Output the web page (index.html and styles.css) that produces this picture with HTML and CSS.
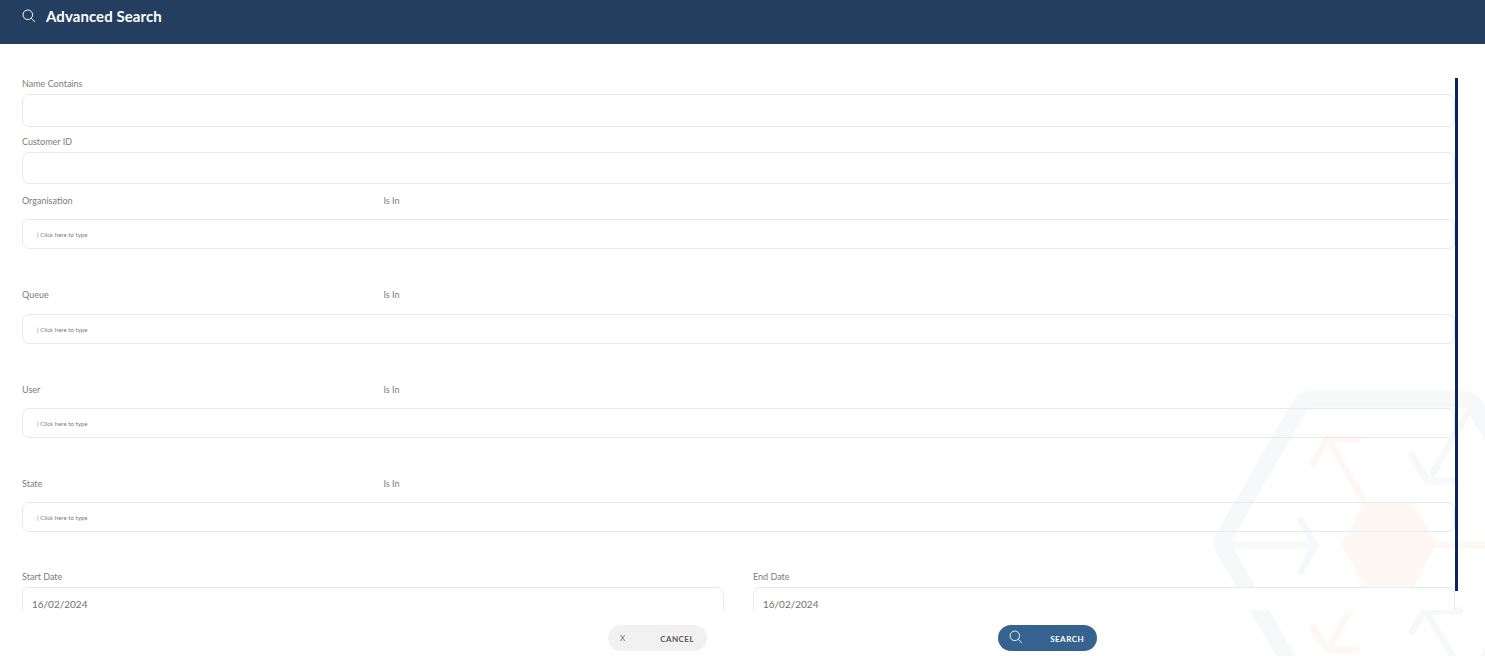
FILE: index.html
```html
<!DOCTYPE html>
<html lang="en">
<head>
<meta charset="utf-8">
<title>Advanced Search</title>
<link rel="stylesheet" href="styles.css">
</head>
<body>
<div class="page">
  <svg class="watermark" viewBox="1200 380 285 276" aria-hidden="true">
    <g fill="none" stroke-linecap="round" stroke-linejoin="round">
      <path class="wm-outer" d="M1224 537 L1299 407 Q1304 399 1313 399 H1462 Q1471 399 1476 407 L1551 537 Q1554 543 1551 549 L1476 679 Q1471 687 1462 687 H1313 Q1304 687 1299 679 L1224 549 Q1221 543 1224 537 Z"/>
      <g class="wm-grey">
        <path d="M1232 545 H1314"/>
        <path d="M1301 520 L1315 545 L1301 571"/>
        <path d="M1412 455 L1425 477 Q1427 481 1432 481 H1457"/>
        <path d="M1433 473 L1470 409 L1490 443"/>
        <path d="M1412 632 L1424 611 L1460 611"/>
        <path d="M1427 613 L1462 672"/>
      </g>
      <g class="wm-orange">
        <path d="M1313 463 L1327 439 H1357"/>
        <path d="M1332 445 L1366 505"/>
        <path d="M1313 627 L1325 647 Q1327 650 1332 650 H1357"/>
        <path d="M1332 642 L1366 583"/>
        <path d="M1435 545 H1490"/>
      </g>
      <path class="wm-core" d="M1342 544 L1365 503 H1412 L1435 544 L1412 587 H1365 Z"/>
    </g>
  </svg>

  <header class="topbar">
    <svg class="topbar-icon" viewBox="0 0 14 14" aria-hidden="true"><circle cx="5.8" cy="5.8" r="4.8"/><path d="M9.3 9.3 L13 13"/></svg>
    <h1 class="topbar-title">Advanced Search</h1>
  </header>

  <main class="form-area">
    <div class="field field-text">
      <label class="label">Name Contains</label>
      <input class="input" type="text">
    </div>
    <div class="field field-text field-text-second">
      <label class="label">Customer ID</label>
      <input class="input" type="text">
    </div>

    <div class="field field-tags">
      <div class="label-row"><span class="label label-main">Organisation</span><span class="label">Is In</span></div>
      <div class="tag-box">| Click here to type</div>
    </div>
    <div class="field field-tags">
      <div class="label-row"><span class="label label-main">Queue</span><span class="label">Is In</span></div>
      <div class="tag-box">| Click here to type</div>
    </div>
    <div class="field field-tags">
      <div class="label-row"><span class="label label-main">User</span><span class="label">Is In</span></div>
      <div class="tag-box">| Click here to type</div>
    </div>
    <div class="field field-tags">
      <div class="label-row"><span class="label label-main">State</span><span class="label">Is In</span></div>
      <div class="tag-box">| Click here to type</div>
    </div>

    <div class="date-row">
      <div class="field">
        <label class="label">Start Date</label>
        <input class="input input-date" type="text" value="16/02/2024">
      </div>
      <div class="field">
        <label class="label">End Date</label>
        <input class="input input-date" type="text" value="16/02/2024">
      </div>
    </div>
    <div class="scroll-thumb"></div>
  </main>

  <footer class="actions">
    <button class="btn btn-cancel" type="button"><span class="btn-x">X</span><span class="btn-text">CANCEL</span></button>
    <button class="btn btn-search" type="button">
      <svg class="btn-icon" viewBox="0 0 14 14" aria-hidden="true"><circle cx="5.8" cy="5.8" r="4.8"/><path d="M9.3 9.3 L13 13"/></svg>
      <span class="btn-text">SEARCH</span>
    </button>
  </footer>
</div>
</body>
</html>
```
FILE: styles.css
```css
* { box-sizing: border-box; }
html, body { margin: 0; height: 100%; overflow: hidden; background: #fff; }
body { font-family: Lato, "Liberation Sans", sans-serif; color: #6b6b6b; }

.page { position: relative; width: 1485px; height: 656px; display: flex; flex-direction: column; overflow: hidden; }

.watermark { position: absolute; right: 0; bottom: 0; width: 285px; height: 276px; }
.wm-outer { stroke: #f7f8fa; stroke-width: 17; }
.wm-grey { stroke: #f7f8fb; stroke-width: 7; }
.wm-orange { stroke: #fef8f5; stroke-width: 7; }
.wm-core { fill: #fef8f5; stroke: #fef8f5; stroke-width: 2; }

.topbar { position: relative; height: 44px; flex: none; background: #233e5e; display: flex; align-items: flex-start; padding: 8px 0 0 22px; gap: 10px; color: #fff; }
.topbar-icon { width: 14px; height: 14px; margin-top: 1px; fill: none; stroke: #fff; stroke-width: 1; }
.topbar-title { margin: 0; font-size: 15px; line-height: 16px; font-weight: 700; letter-spacing: 0.07px; color: #fff; }

.form-area { position: relative; flex: none; height: 566px; overflow: hidden; padding: 34px 30px 0 22px; }
.field { display: flex; flex-direction: column; }
.label { display: block; font-size: 9px; line-height: 12px; color: #7c7c7c; }
.input { display: block; width: 100%; height: 33px; margin-top: 4px; padding: 0 9px; border: 1px solid #e9e9e9; border-radius: 7px; background: transparent; font: inherit; color: #707070; outline: none; }
.field-text { margin-bottom: 9px; }
.field-text-second { margin-bottom: 11.4px; }
.field-text-second .input { height: 32px; }

.field-tags { margin-bottom: 40.33px; }
.label-row { display: flex; height: 12px; margin-top: -0.4px; }
.label-main { width: 361.4px; }
.tag-box { height: 30px; margin-top: 12.4px; padding-left: 14px; border: 1px solid #e9e9e9; border-radius: 7px; font-size: 6px; line-height: 30px; letter-spacing: 0.05px; color: #777; }

.date-row { display: grid; grid-template-columns: 1fr 1fr; column-gap: 29px; margin-top: -1.4px; }
.input-date { height: 36px; padding-bottom: 2px; background: #fff; font-size: 10px; }

.scroll-thumb { position: absolute; left: 1455px; top: 34px; width: 3px; height: 513px; background: #0a2463; }

.actions { position: relative; flex: 1; display: flex; align-items: flex-start; gap: 291px; padding: 15px 0 0 608px; }
.btn { display: flex; align-items: center; justify-content: space-between; width: 99px; height: 26px; border: 0; border-radius: 13px; font: inherit; font-size: 8px; font-weight: 700; padding: 0 13px 0 12px; }
.btn-text { letter-spacing: 0.45px; margin-top: 2px; }
.btn-cancel { background: #f1f1f1; color: #5c5550; }
.btn-x { font-weight: 400; color: #6f6f6f; margin-top: -1px; }
.btn-search { background: #35628f; color: #fff; }
.btn-icon { width: 14px; height: 14px; fill: none; stroke: #fff; stroke-width: 0.9; margin-top: -3px; margin-left: -1px; }
```
